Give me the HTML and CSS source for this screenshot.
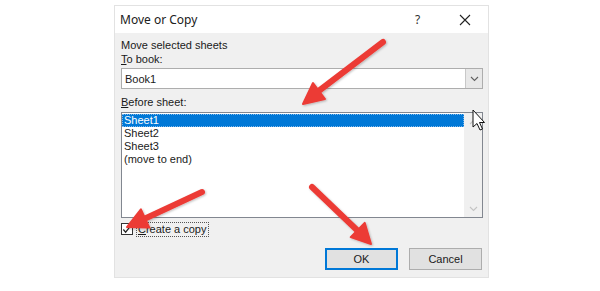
FILE: index.html
```html
<!DOCTYPE html>
<html>
<head>
<meta charset="utf-8">
<link rel="stylesheet" href="styles.css">
</head>
<body>
<div class="page">
  <div class="dialog">
    <div class="titlebar">
      <span class="title">Move or Copy</span>
      <span class="help">?</span>
      <span class="close">
        <svg width="12" height="12" viewBox="0 0 12 12"><path d="M1 1 L11 11 M11 1 L1 11" stroke="#222" stroke-width="1.1" fill="none"/></svg>
      </span>
    </div>
    <div class="content">
      <div class="label">Move selected sheets</div>
      <div class="label"><u>T</u>o book:</div>
      <div class="combo">
        <span class="combo-text">Book1</span>
        <span class="combo-btn">
          <svg width="9" height="6" viewBox="0 0 9 6"><path d="M1 1 L4.5 4.5 L8 1" stroke="#606060" stroke-width="1.1" fill="none"/></svg>
        </span>
      </div>
      <div class="label before"><u>B</u>efore sheet:</div>
      <div class="listbox">
        <div class="items">
          <div class="item selected">Sheet1</div>
          <div class="item">Sheet2</div>
          <div class="item">Sheet3</div>
          <div class="item">(move to end)</div>
        </div>
        <div class="scrollbar">
          <svg width="9" height="6" viewBox="0 0 9 6"><path d="M1 5 L4.5 1.5 L8 5" stroke="#c4c4c4" stroke-width="1.1" fill="none"/></svg>
          <svg width="9" height="6" viewBox="0 0 9 6"><path d="M1 1 L4.5 4.5 L8 1" stroke="#c4c4c4" stroke-width="1.1" fill="none"/></svg>
        </div>
      </div>
      <div class="checkrow">
        <span class="checkbox">
          <svg width="11" height="11" viewBox="0 0 11 11"><path d="M1.5 5.5 L4 8.5 L9.5 1.5" stroke="#222" stroke-width="1.3" fill="none"/></svg>
        </span>
        <span class="checklabel"><u>C</u>reate a copy</span>
      </div>
      <div class="buttons">
        <span class="btn default">OK</span>
        <span class="btn">Cancel</span>
      </div>
    </div>
  </div>
  <svg class="overlay" width="600" height="291" viewBox="0 0 600 291">
    <defs>
      <filter id="sh" x="-20%" y="-20%" width="140%" height="140%">
        <feDropShadow dx="1" dy="1" stdDeviation="1.2" flood-color="#000" flood-opacity="0.25"/>
      </filter>
    </defs>
    <g fill="#ec3b36" stroke="#ec3b36" filter="url(#sh)">
      <line x1="383" y1="42" x2="316" y2="93" stroke-width="6" stroke-linecap="round"/>
      <polygon points="303,104 325,99 313,83" stroke-width="2" stroke-linejoin="round"/>
      <line x1="202" y1="192" x2="143" y2="219.5" stroke-width="6" stroke-linecap="round"/>
      <polygon points="127,227 149.3,227.6 140.9,209.4" stroke-width="2" stroke-linejoin="round"/>
      <line x1="312" y1="187" x2="359" y2="232" stroke-width="6" stroke-linecap="round"/>
      <polygon points="371,244 350.7,237.1 364.7,222.9" stroke-width="2" stroke-linejoin="round"/>
    </g>
    <path d="M473 110 L473 127 L477 123.5 L480 130 L482.5 129 L479.5 122.5 L484.5 122.5 Z" fill="#fff" stroke="#111" stroke-width="1" stroke-linejoin="round"/>
  </svg>
</div>
</body>
</html>
```

FILE: styles.css
```css
* { box-sizing: border-box; }
html, body {
  margin: 0;
  padding: 0;
  background: #ffffff;
}
.page {
  position: relative;
  width: 600px;
  height: 291px;
  padding: 5px 0 0 114px;
  font-family: "Liberation Sans", Arial, sans-serif;
  font-size: 11px;
  color: #1a1a1a;
}
.dialog {
  width: 375px;
  height: 273px;
  background: #f0f0f0;
  border: 1px solid #e2e2e2;
  display: flex;
  flex-direction: column;
}
.titlebar {
  height: 27px;
  background: #ffffff;
  display: flex;
  align-items: center;
  padding-left: 5px;
  flex-shrink: 0;
}
.title {
  font-family: "Noto Sans", "Liberation Sans", sans-serif;
  font-size: 12px;
  flex: 1;
  color: #202020;
}
.help {
  font-family: "Noto Sans", "Liberation Sans", sans-serif;
  font-size: 12px;
  width: 14px;
  margin-right: 30px;
  color: #303030;
}
.close {
  width: 12px;
  height: 12px;
  margin-right: 17px;
  display: flex;
}
.content {
  padding: 5px 5px 0 6px;
  display: flex;
  flex-direction: column;
}
.label {
  height: 14px;
  line-height: 14px;
}
.combo {
  margin-top: 2px;
  height: 21px;
  background: #ffffff;
  border: 1px solid #adadad;
  display: flex;
  align-items: center;
  padding-left: 3px;
}
.combo-text { flex: 1; }
.combo-btn {
  width: 17px;
  height: 19px;
  background: #e8e8e8;
  border-left: 1px solid #c8c8c8;
  display: flex;
  align-items: center;
  justify-content: center;
}
.before { margin-top: 6px; }
.listbox {
  margin-top: 3px;
  height: 106px;
  background: #ffffff;
  border: 1px solid #828790;
  display: flex;
}
.items {
  flex: 1;
  padding: 1px 0 0 0;
}
.item {
  height: 13px;
  line-height: 13px;
  padding-left: 2px;
}
.item.selected {
  background: #0078d7;
  color: #ffffff;
  outline: 1px dotted #7fb8ea;
  outline-offset: -1px;
}
.scrollbar {
  width: 18px;
  background: #f0f0f0;
  display: flex;
  flex-direction: column;
  justify-content: space-between;
  align-items: center;
  padding: 6px 0 5px;
}
.checkrow {
  margin-top: 3px;
  height: 16px;
  display: flex;
  align-items: center;
}
.checkbox {
  width: 12px;
  height: 12px;
  border: 1px solid #333;
  background: #fff;
  display: flex;
  align-items: center;
  justify-content: center;
}
.checklabel {
  margin-left: 3px;
  padding: 0 1px;
  border: 1px dotted #555;
  line-height: 13px;
}
.buttons {
  margin-top: 11px;
  display: flex;
  justify-content: flex-end;
  gap: 11px;
  padding-right: 1px;
}
.btn {
  width: 73px;
  height: 22px;
  background: #e1e1e1;
  border: 1px solid #adadad;
  display: flex;
  align-items: center;
  justify-content: center;
}
.btn.default {
  border: 2px solid #0078d7;
}
.overlay {
  position: absolute;
  left: 0;
  top: 0;
}
```
